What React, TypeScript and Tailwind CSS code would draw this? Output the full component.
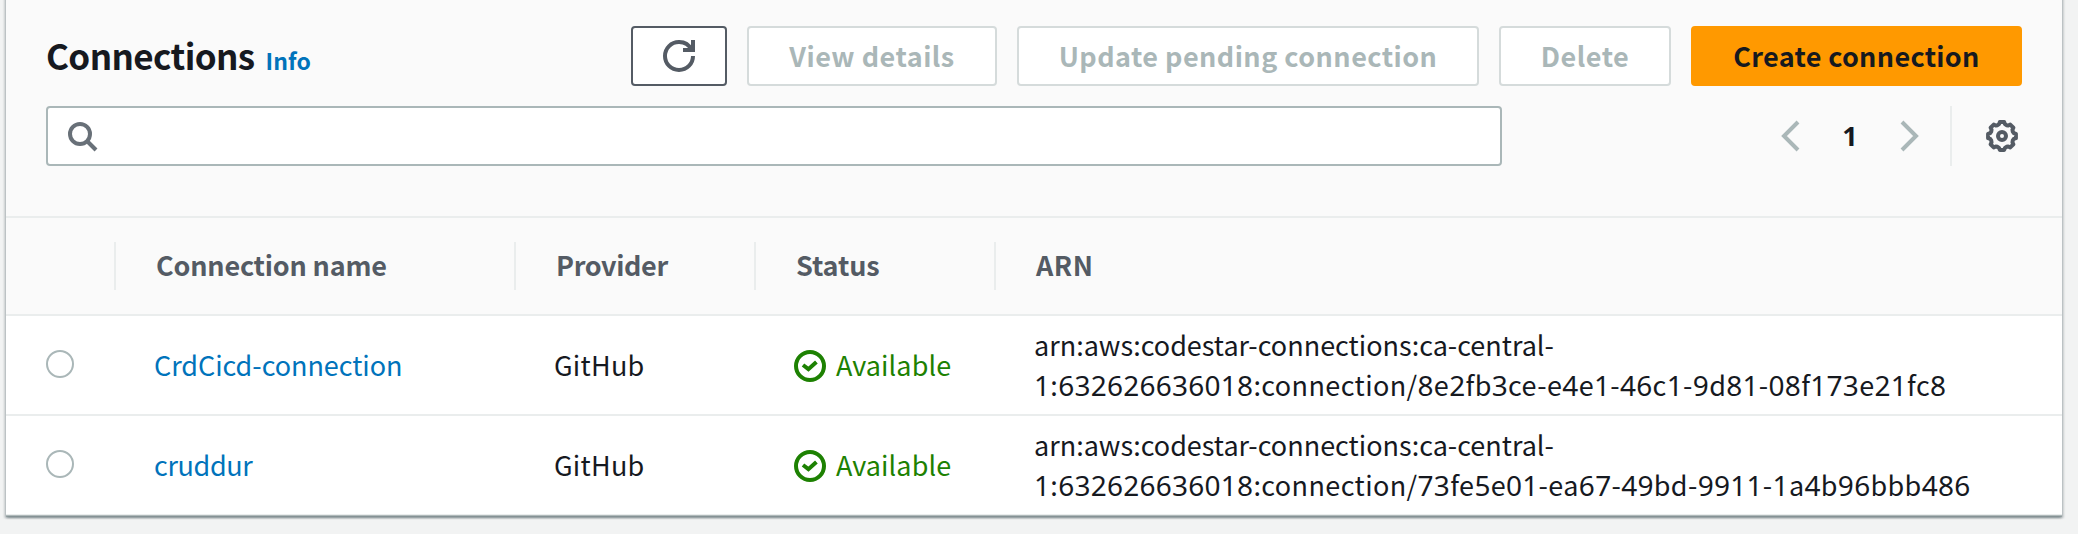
import type { ReactNode } from "react";

const GEAR = Array.from({ length: 8 })
  .flatMap((_, k) =>
    [
      [-9, 7.05],
      [9, 7.05],
      [14, 6.1],
      [22.5, 5.85],
      [31, 6.1],
    ].map(([offset, radius]) => {
      const a = ((k * 45 + offset) * Math.PI) / 180;
      return `${(8 + radius * Math.sin(a)).toFixed(2)} ${(8 - radius * Math.cos(a)).toFixed(2)}`;
    }),
  )
  .join("L");

function Icon({ className, children }: { className: string; children: ReactNode }) {
  return (
    <svg
      viewBox="0 0 16 16"
      fill="none"
      stroke="currentColor"
      strokeWidth="2"
      className={`size-8 shrink-0 overflow-visible ${className}`}
    >
      {children}
    </svg>
  );
}

function Button({ className, children }: { className: string; children: ReactNode }) {
  return (
    <button
      className={`flex h-[60px] shrink-0 items-center justify-center rounded-[4px] border-2 font-bold whitespace-nowrap ${className}`}
    >
      {children}
    </button>
  );
}

function HeaderCell({ className, children }: { className: string; children: ReactNode }) {
  return (
    <div
      className={`flex h-12 items-center border-l-2 border-[#eaeded] pb-0.5 font-bold text-[#545b64] ${className}`}
    >
      {children}
    </div>
  );
}

function Digits({ text }: { text: string }) {
  return (
    <>
      {text.split(/(\d+)/).map((part, i) =>
        /\d/.test(part) ? (
          <span
            key={i}
            className="font-['Noto_Sans',sans-serif] text-[28px] leading-none tracking-[0.25px]"
          >
            {part}
          </span>
        ) : (
          part
        ),
      )}
    </>
  );
}

const COLUMNS = "grid grid-cols-[108px_400px_240px_240px_1fr]";

const rows = [
  {
    name: "CrdCicd-connection",
    nameClass: "tracking-[-0.05px]",
    id: "1:632626636018:connection/8e2fb3ce-e4e1-46c1-9d81-08f173e21fc8",
  },
  {
    name: "cruddur",
    nameClass: "tracking-[-0.37px]",
    id: "1:632626636018:connection/73fe5e01-ea67-49bd-9911-1a4b96bbb486",
  },
];

export default function App() {
  return (
    <div className="h-[534px] overflow-hidden bg-[#f2f3f3] pr-4 pl-1.5 font-['Noto_Sans_CJK_SC','Noto_Sans',sans-serif] text-[27px] leading-10 text-[#16191f]">
      <div className="-mt-1 h-[520px] w-[2056px] bg-white pt-1 shadow-[0_2px_2px_0_rgba(0,28,36,0.3),2px_2px_2px_0_rgba(0,28,36,0.15),-2px_2px_2px_0_rgba(0,28,36,0.15)]">
        <header className="-mt-1 h-[222px] border-b-2 border-[#eaeded] bg-[#fafafa] pt-[30px] pr-10 pl-10">
          <div className="flex h-[60px] items-center justify-between">
            <h1 className="flex items-baseline gap-[11px] pt-0.5 text-[35px] leading-[50px] font-bold tracking-[-0.6px]">
              Connections
              <a className="text-[23px] tracking-[0.1px] text-[#0073bb]">Info</a>
            </h1>
            <div className="flex gap-5">
              <Button className="w-24 border-[#545b64] bg-white text-[#545b64]">
                <Icon className="">
                  <path d="M10 5h5V0" />
                  <path d="M15 8a6.957 6.957 0 0 1-7 7 6.957 6.957 0 0 1-7-7 6.957 6.957 0 0 1 7-7 6.87 6.87 0 0 1 6.3 4" />
                </Icon>
              </Button>
              <Button className="w-[250px] border-[#d5dbdb] bg-white tracking-[0.5px] text-[#aab7b8]">
                View details
              </Button>
              <Button className="w-[462px] border-[#d5dbdb] bg-white tracking-[0.47px] text-[#aab7b8]">
                Update pending connection
              </Button>
              <Button className="w-[172px] border-[#d5dbdb] bg-white tracking-[0.5px] text-[#aab7b8]">
                Delete
              </Button>
              <Button className="w-[331px] border-[#ff9900] bg-[#ff9900] tracking-[0.33px]">
                Create connection
              </Button>
            </div>
          </div>
          <div className="mt-5 flex h-[60px] items-center justify-between">
            <div className="flex h-[60px] w-[1456px] items-center rounded-[4px] border-2 border-[#aab7b8] bg-white pl-[18px] text-[#687078]">
              <Icon className="">
                <circle cx="7" cy="7" r="5" />
                <path d="m15 15-4-4" />
              </Icon>
            </div>
            <div className="flex items-center">
              <Icon className="text-[#aab7b8]">
                <path d="m11 1-7 7 7 7" />
              </Icon>
              <span className="w-[84px] text-center font-['Noto_Sans',sans-serif] font-bold">1</span>
              <Icon className="text-[#aab7b8]">
                <path d="m5 1 7 7-7 7" />
              </Icon>
              <div className="ml-[26px] h-[60px] w-0.5 bg-[#eaeded]" />
              <Icon className="mr-1 ml-[34px] text-[#545b64]">
                <path d={`M${GEAR}Z`} strokeLinejoin="round" />
                <circle cx="8" cy="8" r="2" />
              </Icon>
            </div>
          </div>
        </header>

        <div className={`${COLUMNS} h-[98px] items-center border-b-2 border-[#eaeded] bg-[#fafafa]`}>
          <div />
          <HeaderCell className="pl-10 tracking-[-0.2px]">Connection name</HeaderCell>
          <HeaderCell className="pl-10 tracking-[-0.37px]">Provider</HeaderCell>
          <HeaderCell className="pl-10 tracking-[-0.1px]">Status</HeaderCell>
          <HeaderCell className="pl-10 tracking-[0.5px]">ARN</HeaderCell>
        </div>

        {rows.map((row) => (
          <div
            key={row.name}
            className={`${COLUMNS} h-[100px] items-center border-b-2 border-[#eaeded]`}
          >
            <div className="pb-0.5 pl-10">
              <div className="size-7 rounded-full border-2 border-[#aab7b8] bg-white" />
            </div>
            <a className={`pl-10 text-[#0073bb] ${row.nameClass}`}>{row.name}</a>
            <div className="pl-10 tracking-[0.27px]">GitHub</div>
            <div className="flex items-center gap-2.5 pl-10 tracking-[0.08px] text-[#1d8102]">
              <Icon className="mt-0.5">
                <circle cx="8" cy="8" r="7" />
                <path d="M4.5 7.5 7.2 9.6 11.2 6" />
              </Icon>
              Available
            </div>
            <div className="pl-10 whitespace-nowrap">
              <div className="h-10">arn:aws:codestar-connections:ca-central-</div>
              <div className="h-10 tracking-[0.4px]">
                <Digits text={row.id} />
              </div>
            </div>
          </div>
        ))}
      </div>
      <div className="-mt-px h-0.5 w-[2056px] bg-[#879596]/60" />
    </div>
  );
}
